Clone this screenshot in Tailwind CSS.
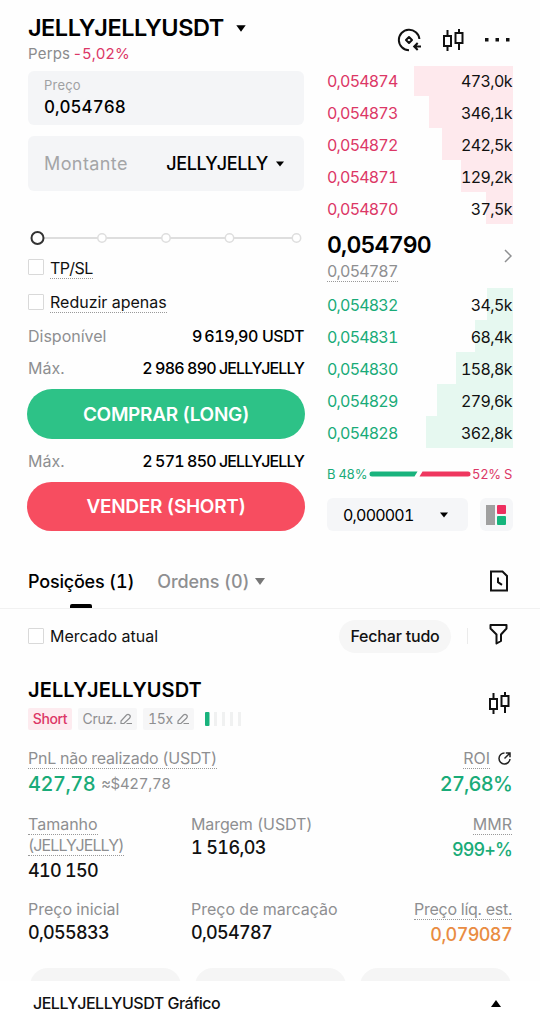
<!DOCTYPE html>
<html lang="pt">
<head>
    <meta charset="UTF-8">
    <meta name="viewport" content="width=device-width, initial-scale=1.0">
    <title>JELLYJELLYUSDT Perps</title>
    <script src="https://cdn.jsdelivr.net/npm/@tailwindcss/browser@4"></script>
</head>
<body class="bg-white">
    <div class="w-[540px] h-[1025px] overflow-hidden flex flex-col bg-[#fefefe] text-[#111] font-['Inter','Liberation_Sans',sans-serif] text-base leading-5 whitespace-nowrap tabular-nums">

        <!-- Trading panel -->
        <div class="flex gap-[23px] pl-7 h-[554px] shrink-0">

            <!-- Order form -->
            <div class="w-[276px] flex flex-col pt-3">
                <div class="h-8 flex items-center">
                    <span class="text-[23.5px] font-semibold text-black tracking-[-0.5px]">JELLYJELLYUSDT</span>
                    <svg class="ml-3 w-[10px] h-[7px]" viewBox="0 0 10 7"><path d="M.3.3h9.4L5 6.7z" fill="#000"/></svg>
                </div>
                <div class="h-5 text-[15px] text-[#8b8b8d] tracking-[0.2px]">Perps <span class="-ml-0.5 text-[#dc3766] tracking-[-0.1px]">-5,02%</span></div>

                <div class="mt-[7px] h-[54px] rounded-md bg-[#f4f5f7] px-4 pt-[5px]">
                    <div class="text-[13px] leading-[18px] text-[#a0a1a3] tracking-[0.2px]">Preço</div>
                    <div class="mt-px text-[17px] leading-6 font-medium text-black">0,054768</div>
                </div>
                <div class="mt-[11px] h-[55px] rounded-md bg-[#f4f5f7] pl-4 pr-5 flex items-center justify-between">
                    <span class="text-lg text-[#a4a5a7] tracking-[0.4px]">Montante</span>
                    <span class="flex items-center text-lg font-medium text-black tracking-[-0.4px]">JELLYJELLY
                        <svg class="ml-2 w-2 h-1.5" viewBox="0 0 8 6"><path d="M0 .5h8L4 5.5z" fill="#000"/></svg>
                    </span>
                </div>

                <svg class="mt-9 w-[276px] h-[22px] shrink-0" viewBox="0 0 276 22" fill="#fff">
                    <path d="M10 11h259" stroke="#dedede" stroke-width="2"/>
                    <g stroke="#dedede" stroke-width="1.5">
                        <circle cx="74" cy="11" r="4.2"/>
                        <circle cx="138" cy="11" r="4.2"/>
                        <circle cx="201.5" cy="11" r="4.2"/>
                        <circle cx="268.5" cy="11" r="4.2"/>
                    </g>
                    <circle cx="9.5" cy="11" r="6" stroke="#333" stroke-width="2"/>
                </svg>

                <div class="mt-2 h-[35px] flex items-start gap-1.5">
                    <span class="mt-[2px] size-4 border border-[#d9d9d9] rounded-[1px] bg-white"></span>
                    <span class="border-b border-dotted border-[#999] h-[22px] pt-[1px] tracking-[-0.6px]">TP/SL</span>
                </div>
                <div class="h-[34px] flex items-start gap-1.5">
                    <span class="mt-[2px] size-4 border border-[#d9d9d9] rounded-[1px] bg-white"></span>
                    <span class="border-b border-dotted border-[#999] h-[21px]">Reduzir apenas</span>
                </div>
                <div class="h-8 flex justify-between"><span class="text-[#8e8f91]">Disponível</span><span class="font-medium text-black tracking-[-0.4px]">9&#8201;619,90 USDT</span></div>
                <div class="h-[31px] flex justify-between"><span class="text-[#8e8f91]">Máx.</span><span class="font-medium text-black tracking-[-0.7px] [word-spacing:-0.6px]">2 986 890 <span class="tracking-[-0.9px]">JELLYJELLY</span></span></div>
                <button class="h-[50px] -mx-px pt-px rounded-full bg-[#2dc287] text-white text-[19px] font-semibold tracking-[-0.3px]">COMPRAR (LONG)</button>
                <div class="mt-3 h-[31px] flex justify-between"><span class="text-[#8e8f91]">Máx.</span><span class="font-medium text-black tracking-[-0.7px] [word-spacing:-0.6px]">2 571 850 <span class="tracking-[-0.9px]">JELLYJELLY</span></span></div>
                <button class="h-[49px] -mx-px pt-px rounded-full bg-[#f74d60] text-white text-[19px] font-semibold tracking-[-0.3px]">VENDER (SHORT)</button>
            </div>

            <!-- Order book -->
            <div class="w-[186px] flex flex-col pt-[27px]">
                <div class="h-[26px] flex items-center justify-end pr-[2px]">
                    <svg class="w-6 h-6" viewBox="0 0 24 24" fill="none" stroke="#111" stroke-width="2">
                        <path d="M22.4 11A10.3 10.3 0 1 0 12 22.3"/>
                        <path d="M12 9 15 12 12 15 9 12z" stroke-linejoin="round"/>
                        <path d="M24 18.5h-6.500M20.7 15l-3.500 3.500 3.500 3.500"/>
                    </svg>
                    <svg class="ml-[21px] w-[22px] h-6" viewBox="0 0 22 24" fill="none" stroke="#111" stroke-width="2">
                        <path d="M2 8h7v10H2zM5.500 2v6M5.500 18v5M13.500 5h7v10h-7zM17 1v4M17 15v7"/>
                    </svg>
                    <svg class="ml-[21px] w-[26px] h-1" viewBox="0 0 26 4"><path d="M0 0h3.500v3.500H0zM10.500 0h3.500v3.500h-3.500zM21 0h3.500v3.500H21z" fill="#111"/></svg>
                </div>

                <div class="mt-[13px] h-[158px] overflow-hidden flex flex-col justify-end" id="asks"></div>

                <div class="h-16 flex items-center justify-between">
                    <div>
                        <div class="text-[23px] leading-7 font-semibold text-black tracking-[-0.8px]">0,054790</div>
                        <div class="w-fit h-[23px] pt-1 border-b border-dotted border-[#999] text-[#8e8f91] leading-4 tracking-[-0.8px]">0,054787</div>
                    </div>
                    <svg class="mr-px w-2 h-[14px]" viewBox="0 0 8 14"><path d="M1 1l6 6-6 6" fill="none" stroke="#8e8f91" stroke-width="1.5"/></svg>
                </div>

                <div id="bids"></div>

                <div class="mt-4 h-5 pr-px flex items-center justify-between text-[13px] tracking-[-0.3px]">
                    <span class="text-[#19ab78]">B 48%</span>
                    <svg class="w-[102px] h-1.5" viewBox="0 0 102 6">
                        <path d="M3 .5h45.500L45.500 5.500H3a2.500 2.500 0 0 1 0-5z" fill="#19b37d"/>
                        <path d="M53.500.5H99a2.500 2.500 0 0 1 0 5H50.500z" fill="#ef375f"/>
                    </svg>
                    <span class="text-[#dc3766]">52% S</span>
                </div>

                <div class="mt-[14px] flex justify-between">
                    <div class="w-[141px] h-[33px] rounded-md bg-[#f5f6f8] pl-4 pr-5 flex items-center justify-between">
                        <span class="text-black tracking-[-0.8px]">0,000001</span>
                        <svg class="w-2 h-1.5" viewBox="0 0 8 6"><path d="M0 .5h8L4 5.5z" fill="#000"/></svg>
                    </div>
                    <div class="w-[33px] h-[33px] rounded-md bg-[#f5f6f8] flex items-center justify-center pr-[2px]">
                        <svg class="w-5 h-5" viewBox="0 0 20 20">
                            <path d="M0 0h9v20H0z" fill="#a0a0a0"/>
                            <rect x="11" width="9" height="9" rx="1" fill="#ee2f60"/>
                            <rect x="11" y="11" width="9" height="9" rx="1" fill="#16b57c"/>
                        </svg>
                    </div>
                </div>
            </div>
        </div>

        <!-- Tabs -->
        <div class="h-[55px] shrink-0 border-b border-[#f1f1f1] pl-7 pr-[31px] flex items-center text-[18px]">
            <div class="relative h-full flex items-center pt-px font-medium text-black tracking-[-0.2px]">Posições (1)
                <span class="absolute left-[42px] bottom-0 w-[22px] h-1 rounded-t-[2px] bg-black"></span>
            </div>
            <div class="ml-[23px] pt-px flex items-center font-medium text-[#8e8f91] tracking-[-0.1px]">Ordens (0)
                <svg class="ml-1.5 w-[10px] h-[7px]" viewBox="0 0 10 7"><path d="M0 0h10L5 7z" fill="#777"/></svg>
            </div>
            <svg class="ml-auto w-5 h-[22px]" viewBox="0 0 20 22" fill="none" stroke="#111" stroke-width="2">
                <path d="M2 1.5h11.500L18 6v14.500H2z"/>
                <path d="M9 7.5v4.700l4 2.700"/>
            </svg>
        </div>

        <!-- Filters -->
        <div class="h-[54px] shrink-0 pl-7 pr-[31px] flex items-center">
            <span class="size-4 border border-[#d9d9d9] rounded-[1px] bg-white"></span>
            <span class="ml-1.5">Mercado atual</span>
            <span class="ml-auto w-[112px] h-[33px] rounded-full bg-[#f6f6f6] flex items-center justify-center font-medium tracking-[-0.2px]">Fechar tudo</span>
            <span class="ml-4 w-px h-4 bg-[#ebebeb]"></span>
            <svg class="ml-5 mb-[5px] w-[21px] h-[22px]" viewBox="0 0 21 22" fill="none" stroke="#111" stroke-width="2" stroke-linejoin="round">
                <path d="M2.500 2h16v3.500l-5.500 6V18l-4.500 2.500v-9l-6-6z"/>
            </svg>
        </div>

        <!-- Position -->
        <div class="h-[318px] shrink-0 px-7 pt-4 overflow-hidden">
            <div class="flex justify-between">
                <div>
                    <div class="pt-px text-xl leading-5 font-semibold text-black tracking-[0.1px]">JELLYJELLYUSDT</div>
                    <div class="mt-2 h-[22px] flex items-center gap-[6px] text-[14px] text-[#8e8f91]">
                        <span class="h-[22px] w-11 rounded-[2px] bg-[#fdebef] text-[#dc3766] font-medium tracking-[-0.4px] flex items-center justify-center">Short</span>
                        <span class="h-[22px] w-[59px] rounded-[2px] bg-[#f6f6f7] tracking-[-0.3px] flex items-center justify-center gap-1">Cruz.
                            <svg class="mb-px w-3 h-3" viewBox="0 0 12 12" fill="none" stroke="#8e8f91" stroke-width="1.2"><path d="M1 10.5V8l5.500-6q1.500-1.200 3 0t.2 3L4 10.500zM6.500 10.500H12"/></svg>
                        </span>
                        <span class="h-[22px] w-[51px] rounded-[2px] bg-[#f6f6f7] tracking-[-0.3px] flex items-center justify-center gap-1">15x
                            <svg class="mb-px w-3 h-3" viewBox="0 0 12 12" fill="none" stroke="#8e8f91" stroke-width="1.2"><path d="M1 10.5V8l5.500-6q1.500-1.200 3 0t.2 3L4 10.500zM6.500 10.500H12"/></svg>
                        </span>
                        <svg class="ml-[5px] w-9 h-[14px]" viewBox="0 0 36 14">
                            <rect width="4.5" height="14" rx="1" fill="#19b37d"/>
                            <path d="M9 0h3v14H9zM17 0h3v14h-3zM25 0h3v14h-3zM33 0h3v14h-3z" fill="#f0f1f1"/>
                        </svg>
                    </div>
                </div>
                <svg class="mt-3 mr-[2px] w-[22px] h-6" viewBox="0 0 22 24" fill="none" stroke="#111" stroke-width="2">
                    <path d="M2 8h7v10H2zM5.500 2v6M5.500 18v5M13.500 5h7v10h-7zM17 1v4M17 15v7"/>
                </svg>
            </div>

            <div class="mt-[18px] h-[66px] flex justify-between text-[#8e8f91]">
                <div>
                    <div class="w-fit h-[21px] border-b border-dotted border-[#999] tracking-[-0.25px]">PnL não realizado (USDT)</div>
                    <div class="mt-[3px] leading-6 flex items-center"><span class="text-xl leading-6 font-medium text-[#19ab78] tracking-[-0.5px]">427,78</span><span class="ml-1.5 text-[15px] tracking-[-0.3px]">≈$427,78</span></div>
                </div>
                <div class="flex flex-col items-end">
                    <div class="flex gap-2">
                        <span class="h-[21px] border-b border-dotted border-[#999]">ROI</span>
                        <svg class="mt-1 mr-px w-[13px] h-[13px]" viewBox="0 0 13 13" fill="none" stroke="#222" stroke-width="1.5"><path d="M6.500 1A5.500 5.500 0 1 0 12 7M6.500 6.500l5-5M7.800 1H12v4.200"/></svg>
                    </div>
                    <div class="mt-[3px] text-xl leading-6 font-medium text-[#19ab78] tracking-[-0.8px]">27,68%</div>
                </div>
            </div>

            <div class="h-[85px] grid grid-cols-[163px_1fr_auto] text-[#8e8f91]">
                <div>
                    <div class="w-fit h-[21px] border-b border-dotted border-[#999]">Tamanho</div>
                    <div class="w-fit h-[21px] border-b border-dotted border-[#999] tracking-[-0.9px]">(JELLYJELLY)</div>
                    <div class="mt-[5px] text-lg leading-5 font-medium text-[#111] tracking-[-0.7px]">410 150</div>
                </div>
                <div>
                    <div class="h-[21px] tracking-[-0.1px]">Margem (USDT)</div>
                    <div class="mt-[3px] text-lg leading-5 font-medium text-[#111] tracking-[-0.6px]">1 516,03</div>
                </div>
                <div class="flex flex-col items-end">
                    <div class="h-[21px] border-b border-dotted border-[#999]">MMR</div>
                    <div class="mt-[5px] text-lg leading-5 font-medium text-[#19ab78] tracking-[-0.9px]">999+%</div>
                </div>
            </div>

            <div class="h-[69px] grid grid-cols-[163px_1fr_auto] text-[#8e8f91]">
                <div>
                    <div class="h-[21px]">Preço inicial</div>
                    <div class="mt-[3px] text-lg leading-5 font-medium text-[#111] tracking-[-0.7px]">0,055833</div>
                </div>
                <div>
                    <div class="h-[21px]">Preço de marcação</div>
                    <div class="mt-[3px] text-lg leading-5 font-medium text-[#111] tracking-[-0.7px]">0,054787</div>
                </div>
                <div class="flex flex-col items-end">
                    <div class="h-[21px] border-b border-dotted border-[#999] tracking-[-0.25px]">Preço líq. est.</div>
                    <div class="mt-[5px] text-lg leading-5 font-medium text-[#e98c42] tracking-[-0.6px]">0,079087</div>
                </div>
            </div>

            <div class="flex gap-[14px] pl-[2px]">
                <div class="w-[151px] h-9 shrink-0 rounded-full bg-[#f5f5f5]"></div>
                <div class="w-[151px] h-9 shrink-0 rounded-full bg-[#f5f5f5]"></div>
                <div class="w-[151px] h-9 shrink-0 rounded-full bg-[#f5f5f5]"></div>
            </div>
        </div>

        <!-- Chart drawer -->
        <div class="grow bg-white pl-[33px] pr-[39px] flex items-center justify-between font-medium">
            <span class="tracking-[-0.5px]">JELLYJELLYUSDT Gráfico</span>
            <svg class="w-[10px] h-[7px]" viewBox="0 0 10 7"><path d="M0 7h10L5 0z" fill="#000"/></svg>
        </div>
    </div>

    <script>
        const asks = [
            ['0,054874', '473,0k', 99],
            ['0,054873', '346,1k', 84],
            ['0,054872', '242,5k', 71],
            ['0,054871', '129,2k', 52],
            ['0,054870', '37,5k', 27],
        ];
        const bids = [
            ['0,054832', '34,5k', 26],
            ['0,054831', '68,4k', 38],
            ['0,054830', '158,8k', 57],
            ['0,054829', '279,6k', 76],
            ['0,054828', '362,8k', 87],
        ];

        // bar width is the depth of each level in px
        function renderRows(id, rows, textClass, barClass) {
            document.getElementById(id).innerHTML = rows.map(([price, size, depth]) => `
                <div class="relative h-8 shrink-0 pt-px flex items-center justify-between">
                    <span class="tracking-[-0.8px] ${textClass}">${price}</span>
                    <div class="absolute right-0 top-0 h-8 ${barClass}" style="width:${depth}px"></div>
                    <span class="relative pr-px tracking-[-0.6px]">${size}</span>
                </div>
            `).join('');
        }

        renderRows('asks', asks, 'text-[#dc3766]', 'bg-[#fee9ed]');
        renderRows('bids', bids, 'text-[#19ab78]', 'bg-[#e6f8f0]');
    </script>
</body>
</html>
